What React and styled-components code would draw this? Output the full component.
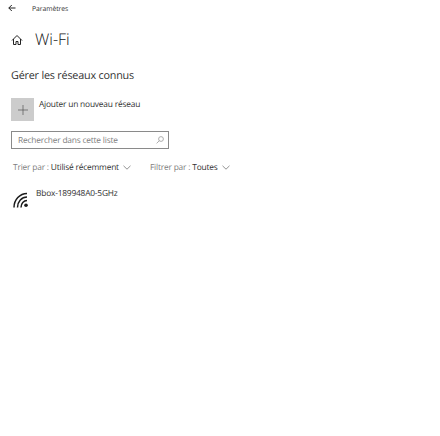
import React from "react";
import styled, { createGlobalStyle } from "styled-components";

const Global = createGlobalStyle`
  html, body { margin: 0; padding: 0; background: #fff; }
  body { font-family: "Open Sans", "Noto Sans", sans-serif; color: #333; text-rendering: geometricPrecision; letter-spacing: -0.2px; }
`;
const Page = styled.div`
  width: 440px; height: 436px; box-sizing: border-box; overflow: hidden;
  display: flex; flex-direction: column; padding: 3px 0 0 0;
`;
const TopBar = styled.div`display: flex; align-items: center; height: 10px; padding-left: 8px;`;
const BackIcon = styled.svg`width: 8px; height: 8px; fill: none; stroke: #222; stroke-width: 1;`;
const TopTitle = styled.span`margin-left: 16px; font-size: 6.8px; letter-spacing: -0.05px; line-height: 10px; position: relative; top: 1px;`;
const Header = styled.div`display: flex; align-items: center; margin-top: 18px; padding-left: 11px; height: 17px;`;
const HomeIcon = styled.svg`width: 12px; height: 12px; fill: none; stroke: #222; stroke-width: 1;`;
const PageTitle = styled.h1`margin: 0 0 0 12px; font-size: 16px; font-weight: 300; letter-spacing: 0; line-height: 17px; color: #111;`;
const Section = styled.h2`margin: 21px 0 0 11px; font-size: 10.8px; font-weight: 400; line-height: 14px;`;
const AddRow = styled.div`display: flex; align-items: flex-start; margin: 15px 0 0 11px;`;
const AddBox = styled.div`width: 23px; height: 23px; background: #cccccc; display: flex; align-items: center; justify-content: center;`;
const PlusIcon = styled.svg`width: 10px; height: 10px; stroke: #555; stroke-width: .7; fill: none;`;
const AddLabel = styled.span`margin-left: 5px; padding-top: 1px; font-size: 8.4px; line-height: 12px;`;
const SearchBox = styled.div`
  display: flex; align-items: center; justify-content: space-between; box-sizing: border-box;
  width: 158px; height: 18px; margin: 10px 0 0 11px; padding: 0 4px 0 6px; border: 1.2px solid #8a8a8a;
`;
const Placeholder = styled.span`font-size: 8.4px; color: #808080;`;
const SearchIcon = styled.svg`width: 8px; height: 8px; stroke: #999; stroke-width: .8; fill: none;`;
const Filters = styled.div`display: flex; align-items: center; margin: 12px 0 0 13px; height: 12px;`;
const Filter = styled.div`display: flex; align-items: center; width: ${p => p.$w}px;`;
const FilterLabel = styled.span`font-size: 8.4px; color: #808080; white-space: pre;`;
const FilterValue = styled.span`font-size: 8.4px; color: #333; white-space: pre;`;
const Chevron = styled.svg`width: 8px; height: 5px; margin-left: 4px; stroke: #777; stroke-width: .8; fill: none;`;
const NetworkRow = styled.div`display: flex; align-items: flex-start; margin: 15px 0 0 13px;`;
const WifiIcon = styled.svg`width: 17px; height: 17px; flex: none; margin-top: 4px; fill: none; stroke: #1c1c1c; stroke-width: 1.5;`;
const NetworkName = styled.span`margin-left: 6px; font-size: 8.4px; line-height: 12px;`;

export default function App() {
  return (
    <Page>
      <Global />
      <TopBar>
        <BackIcon viewBox="0 0 8 8"><path d="M7.5 4H.8M3.8 1 .8 4l3 3" /></BackIcon>
        <TopTitle>Paramètres</TopTitle>
      </TopBar>
      <Header>
        <HomeIcon viewBox="0 0 12 12"><path d="M1 6.5 6 1.5l5 5M2.5 5v5.5h2.5V7.5h2v3h2.5V5" /></HomeIcon>
        <PageTitle>Wi-Fi</PageTitle>
      </Header>
      <Section>Gérer les réseaux connus</Section>
      <AddRow>
        <AddBox><PlusIcon viewBox="0 0 10 10"><path d="M5 0v10M0 5h10" /></PlusIcon></AddBox>
        <AddLabel>Ajouter un nouveau réseau</AddLabel>
      </AddRow>
      <SearchBox>
        <Placeholder>Rechercher dans cette liste</Placeholder>
        <SearchIcon viewBox="0 0 8 8"><circle cx="5" cy="3" r="2.4" /><path d="M3.3 4.7.6 7.4" /></SearchIcon>
      </SearchBox>
      <Filters>
        <Filter $w={137}>
          <FilterLabel>Trier par : </FilterLabel><FilterValue>Utilisé récemment</FilterValue>
          <Chevron viewBox="0 0 8 5"><path d="M.5.8 4 4.2 7.5.8" /></Chevron>
        </Filter>
        <Filter $w={90}>
          <FilterLabel>Filtrer par : </FilterLabel><FilterValue>Toutes</FilterValue>
          <Chevron viewBox="0 0 8 5"><path d="M.5.8 4 4.2 7.5.8" /></Chevron>
        </Filter>
      </Filters>
      <NetworkRow>
        <WifiIcon viewBox="0 0 17 17">
          <path d="M1 15.5A13 14 0 0 1 14 1.5M4.5 15.5A9.5 10.5 0 0 1 14 5M8 15.5a6 7 0 0 1 6-7" />
          <circle cx="13" cy="13.3" r="1.8" fill="#1c1c1c" stroke="none" />
        </WifiIcon>
        <NetworkName>Bbox-189948A0-5GHz</NetworkName>
      </NetworkRow>
    </Page>
  );
}
